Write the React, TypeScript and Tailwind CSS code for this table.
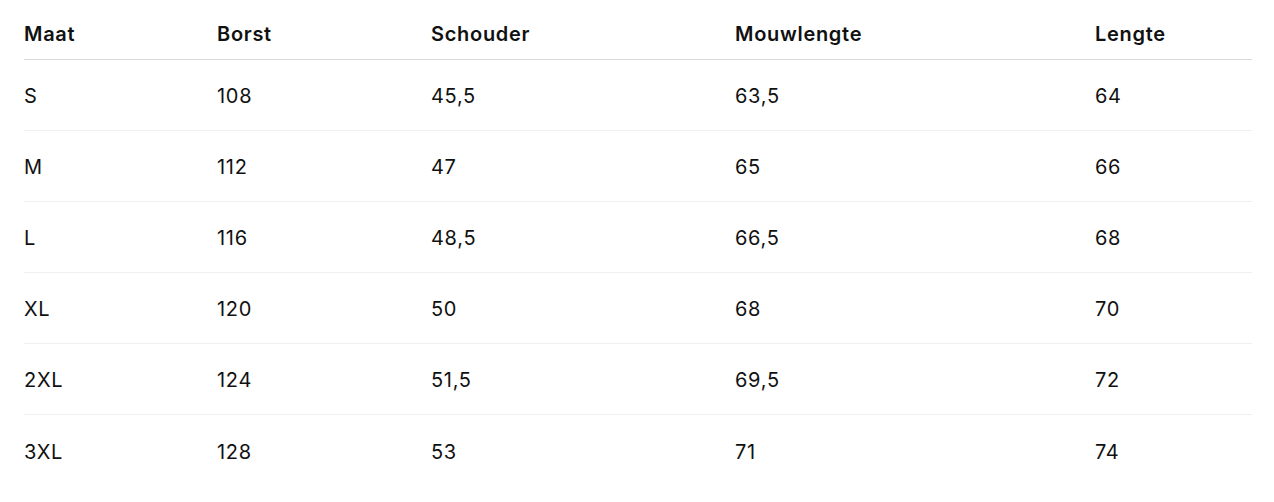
const headers = ["Maat", "Borst", "Schouder", "Mouwlengte", "Lengte"];

const rows = [
  ["S", "108", "45,5", "63,5", "64"],
  ["M", "112", "47", "65", "66"],
  ["L", "116", "48,5", "66,5", "68"],
  ["XL", "120", "50", "68", "70"],
  ["2XL", "124", "51,5", "69,5", "72"],
  ["3XL", "128", "53", "71", "74"],
];

const cols = "grid grid-cols-[193px_214px_304px_360px_1fr]";

export default function App() {
  return (
    <div className="min-h-screen bg-white pl-[24px] pr-[22px] pt-[8px] text-[#111] font-['Inter',sans-serif] text-[20px] tracking-[0.035em]">
      <div className={`${cols} h-[52px] items-center border-b border-[#d9d9d9] font-semibold pt-[1px]`}>
        {headers.map((h) => (
          <div key={h}>{h}</div>
        ))}
      </div>
      {rows.map((r, i) => (
        <div
          key={r[0]}
          className={`${cols} h-[71px] items-center pt-[2px] ${i < rows.length - 1 ? "border-b border-[#efefef]" : ""}`}
        >
          {r.map((c, j) => (
            <div key={j}>{c}</div>
          ))}
        </div>
      ))}
    </div>
  );
}
